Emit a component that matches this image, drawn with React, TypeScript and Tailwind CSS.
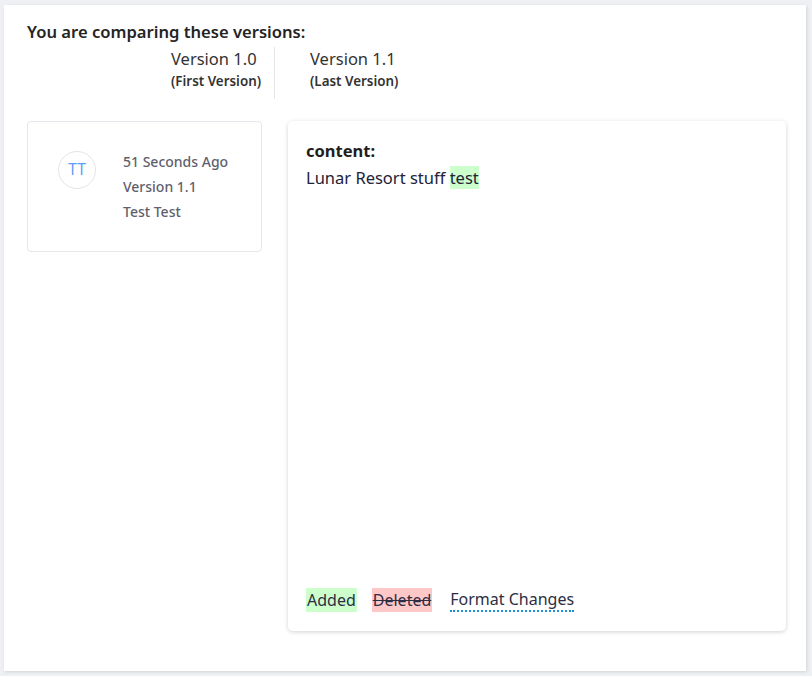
import React from "react";

export default function App() {
  const font = { fontFamily: '"Noto Sans", "Open Sans", sans-serif' };
  return (
    <div className="min-h-[676px] w-[812px] bg-[#eff0f3] pt-[5px] pl-[4px] pr-[6px] pb-[5px]" style={font}>
      <div className="h-[666px] bg-white shadow-[1px_1px_3px_rgba(0,0,0,0.12)] pl-[23px] pt-[15px]">
        <div className="text-[16.6px] font-semibold text-[#242424] leading-[24px]">You are comparing these versions:</div>
        <div className="flex ml-[144px] mt-[3px]">
          <div className="pr-[13px] border-r border-[#e3e3e8] pb-[8px]">
            <div className="text-[16.5px] text-[#333] leading-[24px]">Version 1.0</div>
            <div className="text-[13.4px] font-semibold text-[#333] leading-[20px]">(First Version)</div>
          </div>
          <div className="pl-[35px] pb-[8px]">
            <div className="text-[16.5px] text-[#333] leading-[24px]">Version 1.1</div>
            <div className="text-[13.4px] font-semibold text-[#333] leading-[20px]">(Last Version)</div>
          </div>
        </div>
        <div className="flex gap-[26px] mt-[22px]">
          <div className="w-[235px] h-[131px] border border-[#e6e6ec] rounded-[4px] flex pl-[30px] pt-[29px]">
            <div className="w-[38px] h-[38px] rounded-full border border-[#e4e4ea] flex items-center justify-center text-[15.5px] font-normal text-[#5b9df8]">TT</div>
            <div className="ml-[27px] -mt-[2px] text-[14px] font-medium text-[#5f5f6e] leading-[25px]">
              <div>51 Seconds Ago</div>
              <div>Version 1.1</div>
              <div>Test Test</div>
            </div>
          </div>
          <div className="w-[498px] h-[510px] rounded-[5px] shadow-[0_1px_4px_rgba(0,0,0,0.18)] flex flex-col px-[18px] pt-[18px] pb-[19px]">
            <div className="text-[16.5px] font-bold text-[#1e1e1e] leading-[24px]">content:</div>
            <div className="mt-[3px] text-[16.5px] text-[#22223a] leading-[24px]">
              Lunar Resort stuff <span className="bg-[#ccffcc]">test</span>
            </div>
            <div className="mt-auto flex items-center text-[16px] text-[#2d2d44] leading-[24px]">
              <span className="bg-[#ccffcc] px-px">Added</span>
              <span className="ml-[15px] bg-[#ffc8c8] line-through px-px">Deleted</span>
              <span className="ml-[18px] border-b-2 border-dotted border-[#1e90d8] leading-[22px]">Format Changes</span>
            </div>
          </div>
        </div>
      </div>
    </div>
  );
}
